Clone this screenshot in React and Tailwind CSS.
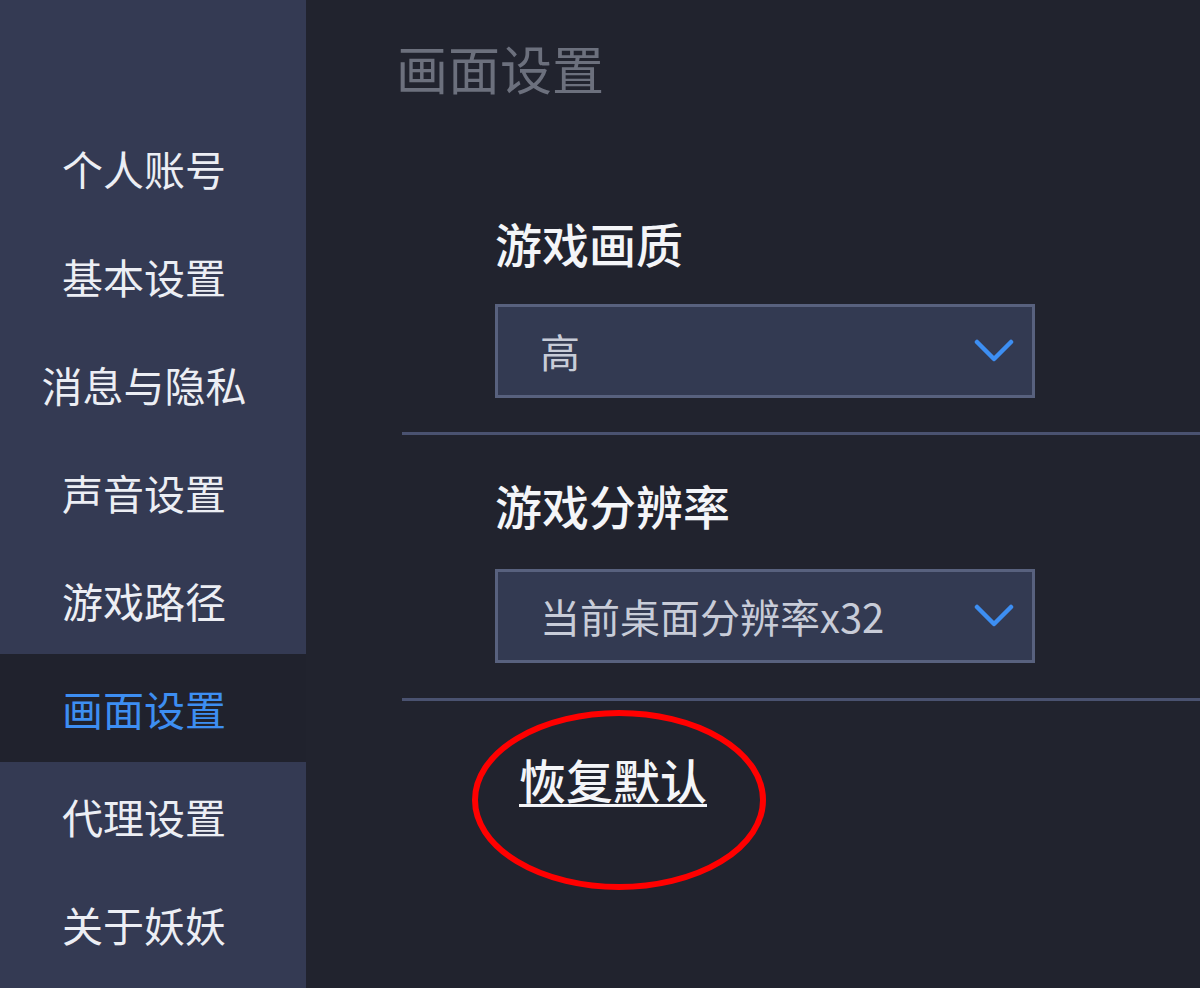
import React, { useState } from "react";

const font = { fontFamily: '"Microsoft YaHei", "Noto Sans CJK SC", "Noto Sans", sans-serif' };

const menu = ["个人账号", "基本设置", "消息与隐私", "声音设置", "游戏路径", "画面设置", "代理设置", "关于妖妖"];

const Chevron = () => (
  <svg width="40" height="26" viewBox="0 0 40 26" fill="none">
    <path d="M3 4 L20 21 L37 4" stroke="#3d8ef2" strokeWidth="4.5" strokeLinecap="round" strokeLinejoin="round" />
  </svg>
);

const Select = ({ value }) => (
  <div className="flex h-[94px] w-[540px] items-center justify-between border-[3px] border-[#58617e] bg-[#333a52] pl-[42px] pr-[18px]">
    <span className="text-[40px] leading-none text-[#c8ccd8]">{value}</span>
    <Chevron />
  </div>
);

const App = () => {
  const [active, setActive] = useState("画面设置");

  return (
    <div className="flex h-[988px] w-[1200px] overflow-hidden bg-[#21232e]" style={font}>
      <aside className="flex h-full w-[306px] shrink-0 flex-col bg-[#343a53] pt-[114px]">
        {menu.map((item) => (
          <button
            key={item}
            onClick={() => setActive(item)}
            className={`flex h-[108px] items-center justify-center pr-[18px] text-[41px] leading-none ${
              active === item ? "bg-[#20222d] text-[#3d8ef2]" : "text-[#eceef4]"
            }`}
          >
            {item}
          </button>
        ))}
      </aside>

      <main className="flex-1">
        <h1 className="pl-[90px] pt-[42px] text-[52px] font-normal leading-none text-[#6c707d]">画面设置</h1>

        <div className="mt-[125px] pl-[96px]">
          <div className="border-b-[3px] border-[#4a5270] pb-[34px] pl-[93px]">
            <div className="text-[47px] font-medium leading-none text-[#f4f5f8]">游戏画质</div>
            <div className="mt-[38px]">
              <Select value="高" />
            </div>
          </div>

          <div className="border-b-[3px] border-[#4a5270] pb-[35px] pl-[93px] pt-[46px]">
            <div className="text-[47px] font-medium leading-none text-[#f4f5f8]">游戏分辨率</div>
            <div className="mt-[41px]">
              <Select value="当前桌面分辨率x32" />
            </div>
          </div>

          <div className="pl-[117px] pt-[54px]">
            <div className="relative inline-block">
              <a href="#" className="text-[47px] font-medium leading-none text-[#f4f5f8] underline underline-offset-[5px] decoration-[3px]">
                恢复默认
              </a>
              <svg
                className="pointer-events-none absolute left-[-48px] top-[-46px]"
                width="296"
                height="184"
                viewBox="0 0 296 184"
                fill="none"
              >
                <ellipse cx="148" cy="91" rx="144" ry="87" stroke="#ff0000" strokeWidth="6" />
              </svg>
            </div>
          </div>
        </div>
      </main>
    </div>
  );
};

export default App;
